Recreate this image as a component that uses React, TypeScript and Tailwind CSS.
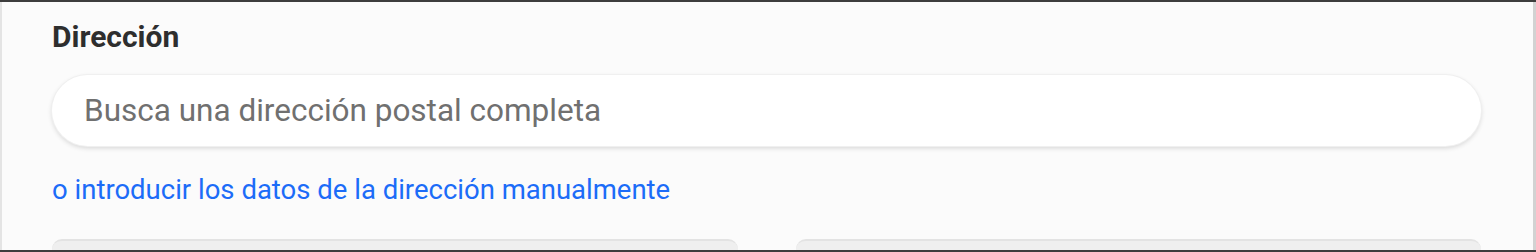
export default function App() {
  return (
    <div className="h-[252px] w-full overflow-hidden bg-[#3d3d3d] pt-[2px] pb-[2px]" style={{ fontFamily: 'Roboto, "Liberation Sans", sans-serif' }}>
      <section className="h-full border-l-2 border-r-[3px] border-l-[#e4e4e4] border-r-[#d2d2d2] bg-[#fbfbfb] pl-[50px] pr-[52px] pt-[17px] overflow-hidden">
        <h2 className="text-[30px] leading-[36px] font-bold text-[#2e2e2e]">Dirección</h2>

        <div className="mt-[20px] h-[71px] rounded-full bg-white shadow-[0_2px_5px_rgba(0,0,0,0.16)] ring-1 ring-[#f0f0f0] flex items-center pl-[32px] pr-8">
          <input
            className="w-full bg-transparent outline-none text-[31.5px] text-[#2b2b2b] placeholder:text-[#707070]"
            placeholder="Busca una dirección postal completa"
          />
        </div>

        <a href="#" className="mt-[28px] block w-fit text-[27.5px] leading-[32px] text-[#1c6cf8]">
          o introducir los datos de la dirección manualmente
        </a>

        <div className="mt-[33px] grid grid-cols-2 gap-[58px]">
          <div className="h-[40px] rounded-t-[10px] bg-[#efefef] border-t-2 border-[#e3e3e3]" />
          <div className="h-[40px] rounded-t-[10px] bg-[#efefef] border-t-2 border-[#e3e3e3]" />
        </div>
      </section>
    </div>
  )
}
